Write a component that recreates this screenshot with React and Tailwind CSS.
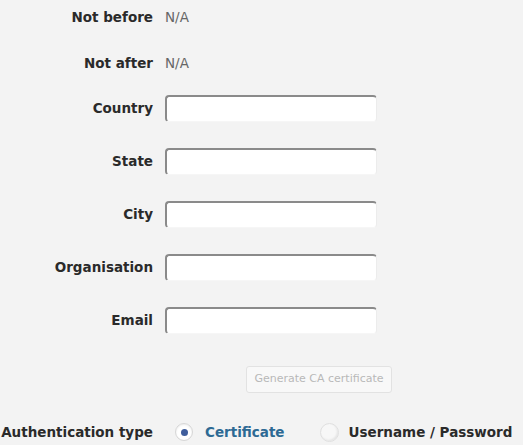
import React from 'react'

const font = { fontFamily: '"DejaVu Sans", Verdana, sans-serif' }

function Label({ children }) {
  return (
    <div className="w-[153px] shrink-0 text-right text-[13.5px] font-bold text-[#2a2a2a] whitespace-nowrap">
      {children}
    </div>
  )
}

function InfoRow({ label, value, className }) {
  return (
    <div className={`flex items-center gap-[12px] h-[34px] ${className}`}>
      <Label>{label}</Label>
      <span className="text-[13.5px] text-[#666]">{value}</span>
    </div>
  )
}

function InputRow({ label, className }) {
  return (
    <div className={`flex items-center gap-[12px] h-[27px] ${className}`}>
      <Label>{label}</Label>
      <input
        type="text"
        className="w-[212px] h-[27px] bg-white rounded-[4px] border-t-2 border-l-2 border-r border-b border-t-[#8a8a8a] border-l-[#8a8a8a] border-r-[#ececec] border-b-[#f6f6f6] outline-none px-1 text-[12px]"
      />
    </div>
  )
}

export default function App() {
  const fields = ['Country', 'State', 'City', 'Organisation', 'Email']
  return (
    <div className="w-[523px] h-[445px] bg-[#f3f3f3] overflow-hidden flex flex-col" style={font}>
      <InfoRow label="Not before" value="N/A" />
      <InfoRow label="Not after" value="N/A" className="mt-[12px]" />
      {fields.map((f, i) => (
        <InputRow key={f} label={f} className={i === 0 ? 'mt-[15px]' : 'mt-[26px]'} />
      ))}
      <div className="flex mt-[32px] pl-[246px]">
        <button
          type="button"
          disabled
          className="w-[146px] h-[27px] bg-[#f8f8f8] border border-[#e2e2e2] rounded-[3px] text-[11px] text-[#b8b8b8]"
        >
          Generate CA certificate
        </button>
      </div>
      <div className="flex items-center mt-[26px] h-[26px]">
        <Label>Authentication type</Label>
        <div className="ml-[22px] w-[18px] h-[18px] rounded-full border border-[#d6d6d6] bg-white flex items-center justify-center shadow-[inset_0_1px_2px_rgba(0,0,0,0.08)]">
          <div className="w-[7px] h-[7px] rounded-full bg-[#3f5d9c]" />
        </div>
        <span className="ml-[12px] text-[13.5px] font-bold text-[#2d6a94] whitespace-nowrap">Certificate</span>
        <div className="ml-[35px] shrink-0 w-[19px] h-[19px] rounded-full border border-[#e0e0e0] bg-[#f7f7f7] shadow-[inset_-1px_-1px_2px_rgba(0,0,0,0.08)]" />
        <span className="ml-[10px] text-[13.5px] font-bold text-[#2a2a2a] whitespace-nowrap">Username / Password</span>
      </div>
    </div>
  )
}
